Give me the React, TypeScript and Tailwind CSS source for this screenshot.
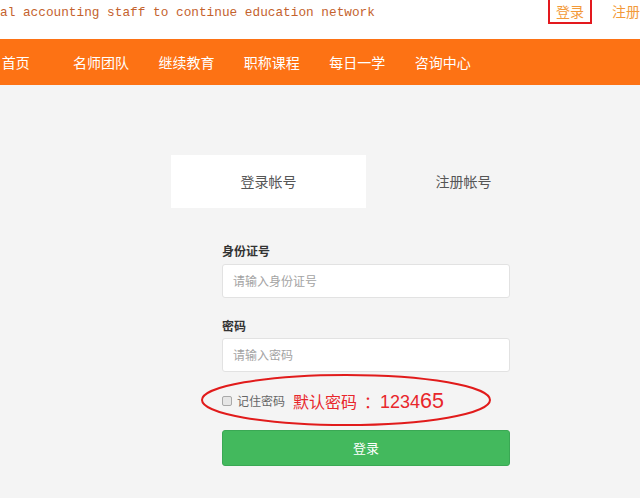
const navItems = ['首页', '名师团队', '继续教育', '职称课程', '每日一学', '咨询中心'];

export default function App() {
  return (
    <div
      className="relative w-[640px] h-[498px] overflow-hidden bg-[#f4f4f4]"
      style={{ fontFamily: '"Noto Sans CJK SC", "Noto Sans", sans-serif' }}
    >
      {/* Top bar */}
      <div className="flex h-[39px] items-start bg-white">
        <span
          className="mt-[4px] whitespace-nowrap text-[12.75px] leading-[17px] text-[#c4622d]"
          style={{ fontFamily: '"Liberation Mono", monospace' }}
        >
          al accounting staff to continue education network
        </span>
        <div className="ml-auto flex items-start">
          <a className="mt-[-2px] flex h-[26px] w-[44px] items-center justify-center border-2 border-[#e3191e] text-[14px] text-[#f39a3a]">
            登录
          </a>
          <a className="ml-[20px] mt-[1px] whitespace-nowrap text-[14px] leading-[20px] text-[#f39a3a]">注册</a>
        </div>
      </div>

      {/* Nav */}
      <nav className="flex h-[46px] items-center bg-[#fd7214]">
        <ul className="ml-[-27px] flex">
          {navItems.map((item) => (
            <li key={item} className="w-[85.4px] text-center text-[14px] leading-[20px] text-white">
              {item}
            </li>
          ))}
        </ul>
      </nav>

      {/* Tabs */}
      <div className="ml-[171px] mt-[70px] flex">
        <div className="flex h-[53px] w-[195px] items-center justify-center bg-white text-[14px] text-[#555]">登录帐号</div>
        <div className="flex h-[53px] w-[195px] items-center justify-center text-[14px] text-[#555]">注册帐号</div>
      </div>

      {/* Form */}
      <form className="ml-[222px] mt-[34px] flex w-[288px] flex-col">
        <label className="text-[12px] font-bold leading-[17px] text-[#333]">身份证号</label>
        <div className="mt-[5px] flex h-[34px] items-center rounded-[3px] border border-[#e2e2e2] bg-white pl-[10px] text-[12px] text-[#a3a3a3]">
          请输入身份证号
        </div>
        <label className="mt-[19px] text-[12px] font-bold leading-[17px] text-[#333]">密码</label>
        <div className="mt-[4px] flex h-[34px] items-center rounded-[3px] border border-[#e2e2e2] bg-white pl-[10px] text-[12px] text-[#a3a3a3]">
          请输入密码
        </div>
        <div className="mt-[18px] flex h-[22px] items-center">
          <span className="h-[10px] w-[10px] rounded-[2px] border border-[#a9a9a9] bg-[#e6e6e6]" />
          <span className="ml-[5px] text-[12px] text-[#666]">记住密码</span>
          <span className="ml-[8px] flex items-baseline whitespace-nowrap text-[#e8262b]">
            <span className="text-[16px]">默认密码</span>
            <span className="w-[23px] overflow-visible pl-[7px] text-left text-[16px]">：</span>
            <span className="text-[18px]" style={{ fontFamily: '"Liberation Sans", sans-serif' }}>1234</span>
            <span className="text-[21.5px]" style={{ fontFamily: '"Liberation Sans", sans-serif' }}>65</span>
          </span>
        </div>
        <button
          type="button"
          className="mt-[18px] flex h-[36px] items-center justify-center rounded-[3px] border border-[#3aa854] bg-[#43b95d] text-[13px] text-white"
        >
          登录
        </button>
      </form>

      {/* Red annotation ellipse */}
      <svg className="pointer-events-none absolute left-0 top-0" width="640" height="498">
        <ellipse cx="346" cy="400" rx="144" ry="25" fill="none" stroke="#e11b1b" strokeWidth="2" />
      </svg>
    </div>
  );
}
